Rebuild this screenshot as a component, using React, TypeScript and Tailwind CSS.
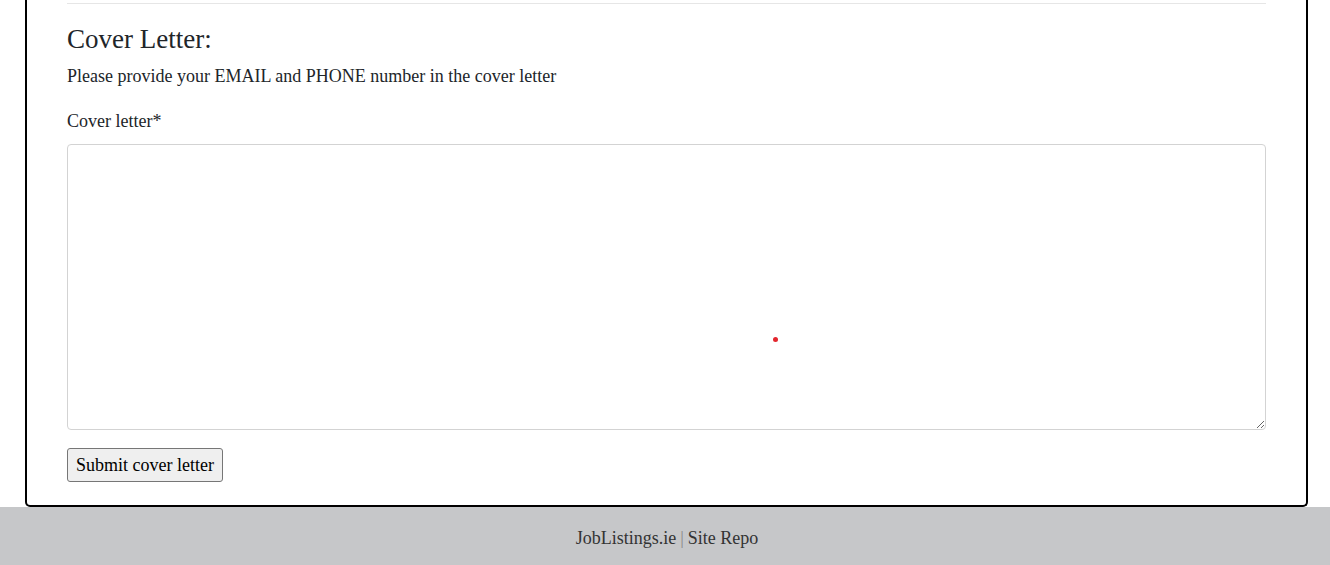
import { useState } from "react";

export default function App() {
  const [letter, setLetter] = useState("");

  return (
    <div className="min-h-[565px] bg-white flex flex-col font-['Liberation_Serif','Times_New_Roman',serif] text-[#212529]">
      {/* Card (top scrolled out of view) */}
      <div className="relative ml-[25px] w-[1283px] border-x-2 border-b-2 border-black rounded-b-[5px] px-[40px] pt-[3px] pb-[23px]">
        <div className="h-px bg-[#e6e6e6]" />
        <h2 className="mt-[19px] text-[27px] leading-[32px] font-normal">Cover Letter:</h2>
        <p className="mt-[9px] text-[18px] leading-[24px]">
          Please provide your EMAIL and PHONE number in the cover letter
        </p>
        <form
          onSubmit={(e) => e.preventDefault()}
          className="flex flex-col items-start"
        >
          <label htmlFor="cover" className="mt-[21px] text-[18px] leading-[24px]">
            Cover letter*
          </label>
          <textarea
            id="cover"
            value={letter}
            onChange={(e) => setLetter(e.target.value)}
            className="mt-[11px] w-full h-[286px] border border-[#d3d3d3] rounded-[4px] bg-white outline-none resize"
          />
          <button
            type="submit"
            className="mt-[18px] h-[34px] px-[8px] bg-[#efefef] border border-[#767676] rounded-[3px] text-[18px] text-black leading-none"
          >
            Submit cover letter
          </button>
        </form>
        <span className="absolute left-[746px] top-[337px] w-[5px] h-[5px] rounded-full bg-[#e3262e]" />
      </div>

      {/* Footer */}
      <footer className="mt-auto h-[58px] bg-[#c6c7c9] flex items-center justify-center pt-[5px] pl-[4px] text-[18px] text-[#333]">
        <span>JobListings.ie</span>
        <span className="mx-[4px] text-[#888]">|</span>
        <span>Site Repo</span>
      </footer>
    </div>
  );
}
